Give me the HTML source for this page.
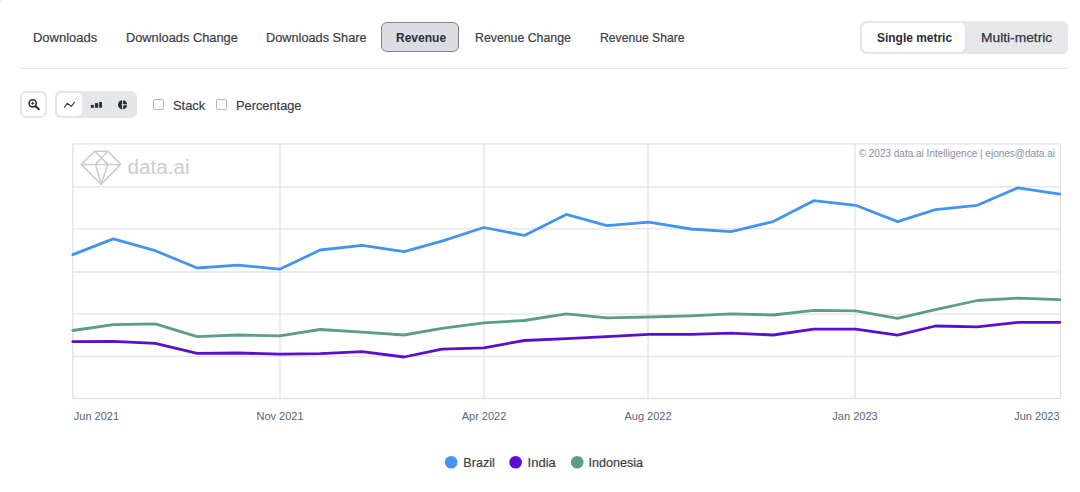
<!DOCTYPE html>
<html><head><meta charset="utf-8">
<style>
html,body{margin:0;padding:0;background:#fff;}
body{width:1080px;height:492px;overflow:hidden;position:relative;font-family:"Liberation Sans",sans-serif;}
.t{position:absolute;white-space:nowrap;line-height:1;font-size:13px;color:#3b3d46;transform-origin:0 0;-webkit-text-stroke:0.2px #3b3d46;}
.b{font-weight:bold;color:#2b2d35;-webkit-text-stroke:0;}
.box{position:absolute;box-sizing:border-box;}
</style></head><body>
<div class="box" style="left:-3px;top:-3px;width:6px;height:6px;border-radius:50%;background:#eeeef1"></div>

<!-- tabs -->
<span class="t" id="tab1" style="left:32.9px;top:31px;">Downloads</span>
<span class="t" id="tab2" style="transform:scaleX(0.985);left:126.2px;top:31px;">Downloads Change</span>
<span class="t" id="tab3" style="transform:scaleX(0.98);left:266.0px;top:31px;">Downloads Share</span>
<div class="box" style="left:381px;top:22px;width:78px;height:30px;border:1px solid #80838f;border-radius:6px;background:#dcdde3"></div>
<span class="t b" id="tab4" style="transform:scaleX(0.925);left:395.7px;top:31px;">Revenue</span>
<span class="t" id="tab5" style="transform:scaleX(0.947);left:475.0px;top:31px;">Revenue Change</span>
<span class="t" id="tab6" style="transform:scaleX(0.936);left:599.9px;top:31px;">Revenue Share</span>

<!-- toggle -->
<div class="box" style="left:860px;top:21px;width:208px;height:33px;border-radius:6px;background:#e6e7eb"></div>
<div class="box" style="left:862px;top:23px;width:103px;height:29px;border-radius:5px;background:#fff;box-shadow:0 0 1px rgba(0,0,0,0.08)"></div>
<span class="t b" id="tg1" style="transform:scaleX(0.919);left:876.5px;top:31px;">Single metric</span>
<span class="t" id="tg2" style="transform:scaleX(1.06);-webkit-text-stroke:0.25px #33353d;left:980.9px;top:31px;color:#33353d">Multi-metric</span>

<!-- divider -->
<div class="box" style="left:20px;top:68px;width:1048px;height:1px;background:#e6e7eb"></div>

<!-- toolbar -->
<div class="box" style="left:20px;top:91px;width:27px;height:27px;border:2px solid #e5e6ea;border-radius:6px;background:#fff"></div>
<svg class="box" style="left:20px;top:91px" width="27" height="27" viewBox="20 91 27 27">
 <circle cx="32.7" cy="103.3" r="3.6" fill="none" stroke="#2a2c33" stroke-width="1.6"/>
 <line x1="35.6" y1="106.3" x2="38.8" y2="109.3" stroke="#2a2c33" stroke-width="2" stroke-linecap="round"/>
 <path d="M32.7 101.7v3.2M31.1 103.3h3.2" stroke="#2a2c33" stroke-width="1"/>
</svg>
<div class="box" style="left:55px;top:91px;width:82px;height:27px;border-radius:6px;background:#e5e6ea"></div>
<div class="box" style="left:57px;top:93px;width:25px;height:23px;border-radius:5px;background:#fff"></div>
<svg class="box" style="left:55px;top:91px" width="82" height="27" viewBox="55 91 82 27">
 <polyline points="64.2,107.8 67.2,103.3 71.4,106.4 74.8,101.8" fill="none" stroke="#3a3c44" stroke-width="1.1" stroke-linejoin="round"/>
 <rect x="90.8" y="104.9" width="3.1" height="2.9" fill="#2a2c33"/>
 <rect x="95" y="103.1" width="3.2" height="4.7" fill="#2a2c33"/>
 <rect x="99.2" y="102" width="2.7" height="5.8" fill="#2a2c33"/>
 <circle cx="122.6" cy="104.8" r="4.6" fill="#2a2c33"/>
 <path d="M122.6 99.8v10M122.6 104.8h5" stroke="#e5e6ea" stroke-width="1"/><path d="M121.2 104.8L122.6 103.4L124 104.8L122.6 106.2Z" fill="#e5e6ea"/>
</svg>
<div class="box" style="left:153px;top:99px;width:11px;height:11px;border:1px solid #b3b7c5;border-radius:2px;background:#fff"></div>
<span class="t" id="stack" style="transform:scaleX(0.99);left:172.8px;top:98.5px;">Stack</span>
<div class="box" style="left:216px;top:99px;width:11px;height:11px;border:1px solid #b3b7c5;border-radius:2px;background:#fff"></div>
<span class="t" id="pct" style="transform:scaleX(0.985);left:235.6px;top:98.5px;">Percentage</span>

<!-- chart -->
<svg class="box" style="left:0;top:0" width="1080" height="492" viewBox="0 0 1080 492">
 <g stroke="#e3e4e9" stroke-width="1.3" fill="none">
  <path d="M73 186.8H1060M73 228.9H1060M73 272.0H1060M73 314.1H1060M73 356.3H1060"/>
  <path d="M280 144V398M484 144V398M648 144V398M855 144V398"/>
 </g>
 <path d="M72.8 398V144.9Q72.8 143.9 73.8 143.9H1059.4Q1060.4 143.9 1060.4 144.9V398" fill="none" stroke="#e1e2e7" stroke-width="1.3"/>
 <path d="M72.3 398.5H1060.9" stroke="#d8dae0" stroke-width="1.2"/>
 <g fill="none" stroke="#cbcbcb" stroke-width="1.5" stroke-linejoin="round">
  <path d="M94.8 151.3H107.8L120.7 164.4L101.1 184.3L81.2 164.4Z"/>
  <path d="M81.2 164.4H120.7M94.8 151.3L107.8 164.4L101.1 184.3L95.6 164.4L107.8 151.3"/>
 </g>
 <text x="127.5" y="174" font-family="Liberation Sans" font-size="20" fill="#cccccc" textLength="62" lengthAdjust="spacingAndGlyphs">data.ai</text>
 <text x="1055" y="156.5" text-anchor="end" font-family="Liberation Sans" font-size="10" fill="#8a8f9c">© 2023 data.ai Intelligence | ejones@data.ai</text>
 <g fill="none" stroke-width="2.8" stroke-linejoin="round" stroke-linecap="round">
  <path stroke="#5b9e80" d="M72.80 330.50 L113.36 324.70 L155.28 323.80 L197.19 336.70 L237.75 335.00 L279.66 335.80 L320.23 329.50 L362.14 332.20 L404.05 335.00 L441.91 328.30 L483.82 322.80 L524.39 320.50 L566.30 313.80 L606.86 317.80 L648.78 317.00 L690.69 315.80 L731.25 313.80 L773.16 315.00 L813.73 310.30 L855.64 310.80 L897.55 318.40 L935.41 309.60 L977.32 300.50 L1017.89 298.20 L1059.80 299.60"/>
  <path stroke="#5a0fce" d="M72.80 341.70 L113.36 341.30 L155.28 343.30 L197.19 353.30 L237.75 353.00 L279.66 354.20 L320.23 353.70 L362.14 351.70 L404.05 357.00 L441.91 349.20 L483.82 347.80 L524.39 340.50 L566.30 338.70 L606.86 336.70 L648.78 334.30 L690.69 334.30 L731.25 333.20 L773.16 335.00 L813.73 329.20 L855.64 329.20 L897.55 335.10 L935.41 326.00 L977.32 326.90 L1017.89 322.30 L1059.80 322.30"/>
  <path stroke="#4394ef" d="M72.80 254.60 L113.36 238.90 L155.28 250.70 L197.19 268.00 L237.75 265.10 L279.66 269.20 L320.23 250.00 L362.14 245.40 L404.05 251.60 L441.91 241.20 L483.82 227.50 L524.39 235.40 L566.30 214.40 L606.86 225.70 L648.78 222.10 L690.69 229.00 L731.25 231.60 L773.16 221.60 L813.73 200.70 L855.64 205.30 L897.55 221.60 L935.41 209.60 L977.32 205.30 L1017.89 187.80 L1059.80 194.10"/>
 </g>
 <g font-family="Liberation Sans" font-size="11" fill="#5a6478">
  <text x="73.8" y="420">Jun 2021</text>
  <text x="280" y="420" text-anchor="middle">Nov 2021</text>
  <text x="484" y="420" text-anchor="middle">Apr 2022</text>
  <text x="648" y="420" text-anchor="middle">Aug 2022</text>
  <text x="855" y="420" text-anchor="middle">Jan 2023</text>
  <text x="1059.5" y="420" text-anchor="end">Jun 2023</text>
 </g>
 <circle cx="451.2" cy="462.2" r="6.3" fill="#4394ef"/>
 <circle cx="515.6" cy="462.2" r="6.3" fill="#5a0fce"/>
 <circle cx="577.2" cy="462.2" r="6.3" fill="#5b9e80"/>
 <g font-family="Liberation Sans" font-size="13" fill="#3b3d46" stroke="#3b3d46" stroke-width="0.2">
  <text x="463.3" y="467.3" textLength="31.5" lengthAdjust="spacingAndGlyphs">Brazil</text>
  <text x="527.6" y="467.3">India</text>
  <text x="588.5" y="467.3" textLength="54.5" lengthAdjust="spacingAndGlyphs">Indonesia</text>
 </g>
</svg>
</body></html>
